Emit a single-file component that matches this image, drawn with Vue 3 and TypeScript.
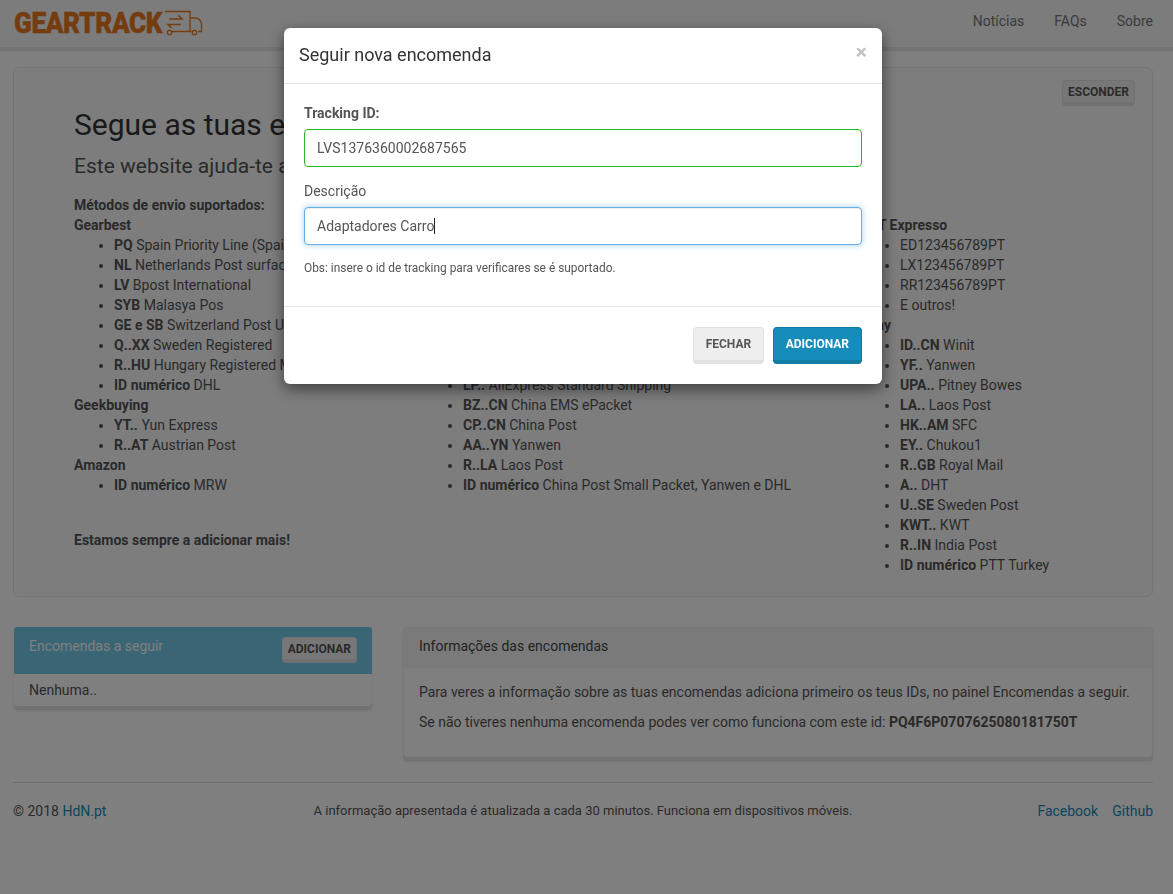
<script setup lang="ts">
type Item = { code: string; name: string }
type Group = { title: string; items: Item[] }

const col1: Group[] = [
  { title: 'Gearbest', items: [
    { code: 'PQ', name: 'Spain Priority Line (Spain)' },
    { code: 'NL', name: 'Netherlands Post surface' },
    { code: 'LV', name: 'Bpost International' },
    { code: 'SYB', name: 'Malasya Pos' },
    { code: 'GE e SB', name: 'Switzerland Post Unregistered' },
    { code: 'Q..XX', name: 'Sweden Registered' },
    { code: 'R..HU', name: 'Hungary Registered Mail' },
    { code: 'ID numérico', name: 'DHL' },
  ] },
  { title: 'Geekbuying', items: [
    { code: 'YT..', name: 'Yun Express' },
    { code: 'R..AT', name: 'Austrian Post' },
  ] },
  { title: 'Amazon', items: [{ code: 'ID numérico', name: 'MRW' }] },
]
const col2: Item[] = [
  { code: 'LP..', name: 'AliExpress Standard Shipping' },
  { code: 'BZ..CN', name: 'China EMS ePacket' },
  { code: 'CP..CN', name: 'China Post' },
  { code: 'AA..YN', name: 'Yanwen' },
  { code: 'R..LA', name: 'Laos Post' },
  { code: 'ID numérico', name: 'China Post Small Packet, Yanwen e DHL' },
]
const col3: Group[] = [
  { title: 'CTT Expresso', items: [
    { code: '', name: 'ED123456789PT' },
    { code: '', name: 'LX123456789PT' },
    { code: '', name: 'RR123456789PT' },
    { code: '', name: 'E outros!' },
  ] },
  { title: 'eBay', items: [
    { code: 'ID..CN', name: 'Winit' },
    { code: 'YF..', name: 'Yanwen' },
    { code: 'UPA..', name: 'Pitney Bowes' },
    { code: 'LA..', name: 'Laos Post' },
    { code: 'HK..AM', name: 'SFC' },
    { code: 'EY..', name: 'Chukou1' },
    { code: 'R..GB', name: 'Royal Mail' },
    { code: 'A..', name: 'DHT' },
    { code: 'U..SE', name: 'Sweden Post' },
    { code: 'KWT..', name: 'KWT' },
    { code: 'R..IN', name: 'India Post' },
    { code: 'ID numérico', name: 'PTT Turkey' },
  ] },
]
</script>

<template>
  <div class="page">
    <header class="navbar">
      <a class="brand">
        <span class="brand-text">GEARTRACK</span>
        <svg class="truck" width="41" height="26" viewBox="0 0 41 26" fill="none" stroke="#e8791f" stroke-width="1.300">
          <path d="M3 1.500H28V21.500H10M28 8H33Q38.500 8 39.500 14V21.500H36M28 21.500H29.500" />
          <circle cx="7.500" cy="22.500" r="2.200" />
          <circle cx="32.500" cy="22.500" r="2.200" />
          <path d="M7 9H20L16.500 5.500M19 14.500H6L9.500 18" stroke-width="1.500" />
        </svg>
      </a>
      <nav class="nav-links">
        <a>Notícias</a>
        <a>FAQs</a>
        <a>Sobre</a>
      </nav>
    </header>

    <main class="container">
      <section class="jumbotron">
        <button class="btn btn-default btn-small hide-btn">Esconder</button>
        <h1>Segue as tuas encomendas</h1>
        <h2>Este website ajuda-te a seguir as tuas encomendas</h2>
        <div class="methods">
          <strong>Métodos de envio suportados:</strong>
          <div class="methods-grid">
            <div>
              <template v-for="g in col1" :key="g.title">
                <strong>{{ g.title }}</strong>
                <ul>
                  <li v-for="i in g.items" :key="i.code + i.name"><strong>{{ i.code }}</strong> {{ i.name }}</li>
                </ul>
              </template>
              <p class="more"><strong>Estamos sempre a adicionar mais!</strong></p>
            </div>
            <div class="col-mid">
              <ul>
                <li v-for="i in col2" :key="i.code"><strong>{{ i.code }}</strong> {{ i.name }}</li>
              </ul>
            </div>
            <div>
              <template v-for="g in col3" :key="g.title">
                <strong>{{ g.title }}</strong>
                <ul>
                  <li v-for="i in g.items" :key="i.code + i.name"><strong v-if="i.code">{{ i.code }}</strong> {{ i.name }}</li>
                </ul>
              </template>
            </div>
          </div>
        </div>
      </section>

      <div class="panels">
        <section class="panel panel-info">
          <div class="panel-heading info-heading">
            <span class="panel-title">Encomendas a seguir</span>
            <button class="btn btn-default btn-small">Adicionar</button>
          </div>
          <div class="panel-body-small">Nenhuma..</div>
        </section>
        <section class="panel">
          <div class="panel-heading default-heading">Informações das encomendas</div>
          <div class="panel-body">
            <p>Para veres a informação sobre as tuas encomendas adiciona primeiro os teus IDs, no painel Encomendas a seguir.</p>
            <p>Se não tiveres nenhuma encomenda podes ver como funciona com este id: <strong>PQ4F6P0707625080181750T</strong></p>
          </div>
        </section>
      </div>

      <footer class="footer">
        <span>© 2018 <a>HdN.pt</a></span>
        <span class="footer-mid">A informação apresentada é atualizada a cada 30 minutos. Funciona em dispositivos móveis.</span>
        <span class="footer-links"><a>Facebook</a><a>Github</a></span>
      </footer>
    </main>

    <div class="backdrop"></div>
    <div class="modal">
      <div class="modal-header">
        <h4>Seguir nova encomenda</h4>
        <span class="close">×</span>
      </div>
      <div class="modal-body">
        <label class="bold">Tracking ID:</label>
        <input class="field field-ok" value="LVS1376360002687565" />
        <label>Descrição</label>
        <div class="field field-focus"><span>Adaptadores Carro</span><i class="caret"></i></div>
        <small>Obs: insere o id de tracking para verificares se é suportado.</small>
      </div>
      <div class="modal-footer">
        <button class="btn btn-default btn-close">Fechar</button>
        <button class="btn btn-primary">Adicionar</button>
      </div>
    </div>
  </div>
</template>

<style>
html, body { margin: 0; background: #fff; }
</style>

<style scoped>
.page {
  min-height: 894px;
  font-family: Roboto, "Liberation Sans", sans-serif;
  font-size: 14px;
  line-height: 20px;
  color: #555;
  background: #fff;
  box-sizing: border-box;
}
a { color: #158cba; text-decoration: none; }
strong { font-weight: 700; }

.navbar {
  height: 42px;
  border-bottom: 4px solid #e7e7e7;
  background: #f8f8f8;
  display: flex;
  align-items: center;
  justify-content: space-between;
  padding: 0 20px 5px 14px;
  box-sizing: content-box;
}
.brand { display: flex; align-items: center; margin-top: 4px; }
.brand-text {
  display: inline-block;
  font-size: 29px;
  line-height: 29px;
  font-weight: 900;
  letter-spacing: -0.4px;
  color: #e8791f;
  -webkit-text-stroke: 0.4px #e8791f;
  transform: scaleX(0.9);
  transform-origin: left center;
  margin-right: -17px;
}
.truck { margin-left: 0; margin-top: -1px; }
.nav-links { display: flex; gap: 30px; }
.nav-links a { color: #777; }

.container { padding: 16px 20px 0 13px; }

.jumbotron {
  position: relative;
  height: 530px;
  box-sizing: border-box;
  border: 1px solid #e7e7e7;
  border-radius: 6px;
  background: #fafafa;
  padding: 40px 60px 0;
}
.hide-btn { position: absolute; top: 12px; right: 17px; }
h1 {
  margin: 0;
  font-size: 30px;
  line-height: 33px;
  font-weight: 400;
  color: #333;
}
h2 {
  margin: 13px 0 0;
  font-size: 21px;
  line-height: 24px;
  font-weight: 400;
  color: #555;
}
.methods { margin-top: 17px; }
.methods > strong { display: block; }
.methods-grid { display: grid; grid-template-columns: 349px 437px 1fr; }
ul { margin: 0; padding-left: 40px; }
.col-mid { padding-top: 160px; }
.more { margin: 35px 0 0; }

.btn {
  font-family: inherit;
  font-size: 12px;
  line-height: 18px;
  font-weight: 700;
  text-transform: uppercase;
  border-style: solid;
  border-width: 1px 1px 4px;
  border-radius: 4px;
  padding: 6px 12px;
  box-sizing: border-box;
}
.btn-default { background: #eee; border-color: #e2e2e2; color: #555; }
.btn-primary { background: #158cba; border-color: #127ba3; color: #fff; }
.btn-small { height: 26px; padding: 1px 5px; line-height: 18px; }
.btn-close { padding: 6px 11.500px; }

.panels {
  display: grid;
  grid-template-columns: 358px 750px;
  gap: 31px;
  margin: 30px 0 0 1px;
  align-items: start;
}
.panel {
  border: 1px solid #eee;
  border-bottom-width: 0;
  border-radius: 4px;
  background: #fff;
  box-shadow: 0 4px 0 #e4e4e4, 0 5px 3px rgba(0, 0, 0, 0.08);
  height: 130px;
  box-sizing: border-box;
}
.panel-info { height: 79px; border: 0; }
.panel-heading { border-radius: 3px 3px 0 0; }
.info-heading {
  height: 47px;
  box-sizing: border-box;
  background: #75caeb;
  display: flex;
  justify-content: space-between;
  padding: 10px 15px 0;
}
.panel-title { color: #fff; font-size: 14px; line-height: 18px; }
.panel-body-small { padding: 6px 15px; }
.default-heading {
  height: 40px;
  box-sizing: border-box;
  background: #f5f5f5;
  padding: 8px 15px;
  color: #444;
}
.panel-body { padding: 14px 15px; }
.panel-body p { margin: 0 0 10px; }

.footer {
  margin-top: 25px;
  border-top: 1px solid #ddd;
  padding-top: 18px;
  display: grid;
  grid-template-columns: 1fr auto 1fr;
  align-items: center;
}
.footer-mid { font-size: 13px; }
.footer-links { display: flex; gap: 14px; justify-content: flex-end; }

.backdrop {
  position: fixed;
  inset: 0;
  background: rgba(0, 0, 0, 0.5);
}
.modal {
  position: fixed;
  left: 284px;
  top: 28px;
  width: 598px;
  height: 356px;
  box-sizing: border-box;
  background: #fff;
  border-radius: 6px;
  box-shadow: 0 5px 15px rgba(0, 0, 0, 0.5);
  display: flex;
  flex-direction: column;
}
.modal-header {
  height: 56px;
  box-sizing: border-box;
  border-bottom: 1px solid #e5e5e5;
  display: flex;
  justify-content: space-between;
  padding: 15px 15px 0;
}
h4 { margin: 2px 0 0; font-size: 18px; line-height: 20px; font-weight: 400; color: #333; }
.close { font-size: 21px; line-height: 20px; font-weight: 700; color: #c2c2c2; margin-top: -1px; }
.modal-body {
  flex: 1;
  padding: 19px 20px 0;
  display: flex;
  flex-direction: column;
  align-items: stretch;
}
label { display: block; height: 20px; line-height: 20px; }
label.bold { font-weight: 700; }
.field {
  display: block;
  width: 100%;
  height: 38px;
  box-sizing: border-box;
  margin: 6px 0 14px;
  padding: 0 12px;
  border: 1px solid #e7e7e7;
  border-radius: 4px;
  font-family: inherit;
  font-size: 14px;
  color: #555;
  outline: none;
  line-height: 36px;
  background: #fff;
}
.field-ok { border-color: #28b62c; }
.field-focus {
  border-color: #66afe9;
  box-shadow: inset 0 1px 1px rgba(0, 0, 0, 0.075), 0 0 6px rgba(102, 175, 233, 0.6);
  display: flex;
  align-items: center;
}
.caret { display: block; width: 1px; height: 16px; background: #222; }
small { font-size: 11.900px; line-height: 18px; }
.modal-footer {
  height: 78px;
  box-sizing: border-box;
  border-top: 1px solid #e5e5e5;
  display: flex;
  justify-content: flex-end;
  gap: 9px;
  padding: 20px 20px 0;
}
.modal-footer .btn { height: 37px; }
</style>
